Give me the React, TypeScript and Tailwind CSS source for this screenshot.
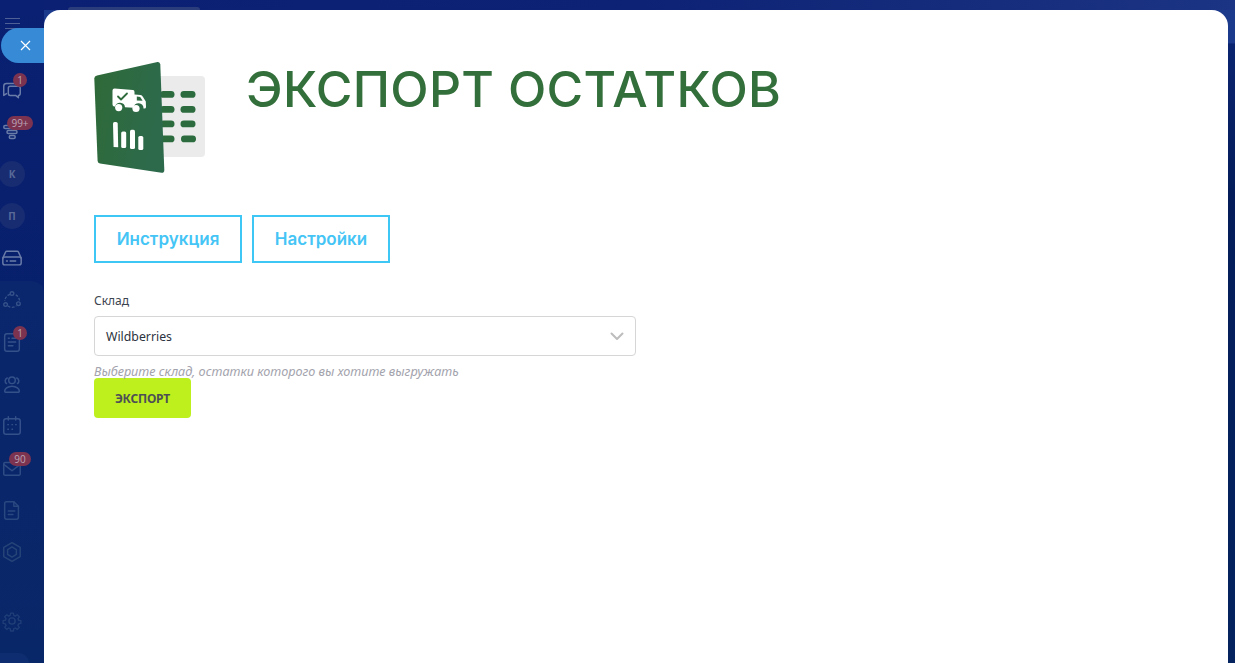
import React from "react";

function Logo() {
  return (
    <svg width="112" height="113" viewBox="94 61 112 113" className="block shrink-0">
      <defs>
        <linearGradient id="g" x1="0" y1="0" x2="1" y2="0.3">
          <stop offset="0" stopColor="#2e6a37" />
          <stop offset="1" stopColor="#2d6a4c" />
        </linearGradient>
      </defs>
      <rect x="150" y="76" width="55" height="81" rx="4" fill="#ebebeb" />
      <g fill="#2b6b3e">
        <rect x="160" y="91" width="14.5" height="6.8" rx="3.4" />
        <rect x="180.5" y="91" width="15" height="6.8" rx="3.4" />
        <rect x="160" y="106" width="14.5" height="6.8" rx="3.4" />
        <rect x="180.5" y="106" width="15" height="6.8" rx="3.4" />
        <rect x="160" y="120.5" width="14.5" height="6.8" rx="3.4" />
        <rect x="180.5" y="120.5" width="15" height="6.8" rx="3.4" />
        <rect x="160" y="135.5" width="14.5" height="6.8" rx="3.4" />
        <rect x="181" y="135.5" width="15" height="6.8" rx="3.4" />
      </g>
      <path
        d="M97 75.5 L157.5 62 Q160 61.6 160.3 64.5 L164.3 170 Q164.4 173 161.5 172.8 L100 163.6 Q97.8 163.2 97.6 161 L94.3 78.5 Q94.3 76.2 97 75.5 Z"
        fill="url(#g)"
      />
      <path
        d="M112.5 90.5 Q112.5 88.5 114.5 88.4 L133 90 Q134.5 90.2 134.5 92 L134.5 94.5 L140.5 95 Q142 95.2 143 97 L145.8 101.5 L146 107 Q146 108.5 144.5 108.5 L143.5 108.5 A5 5 0 0 0 133.5 107.8 L125 107.2 A5 5 0 0 0 115.2 106.5 L114 106.4 Q112.5 106.2 112.5 104.5 Z"
        fill="#fff"
      />
      <circle cx="118.7" cy="107.6" r="3.6" fill="#fff" />
      <circle cx="136" cy="108.5" r="3.6" fill="#fff" />
      <path d="M118 96.5 L121 99.5 L127 93.5" stroke="#2f6b3c" strokeWidth="1.8" fill="none" strokeLinecap="round" strokeLinejoin="round" />
      <path d="M136.8 96.6 L140.2 96.9 L142.6 100.8 L136.8 100.4 Z" fill="#2f6b42" />
      <g fill="#fff">
        <path d="M113 123.5 Q113 122 114.6 122 L116 122 Q117.6 122 117.7 123.5 L118.2 147.2 L113.6 147 Z" />
        <rect x="121.2" y="131.5" width="5" height="16.5" rx="1.6" />
        <rect x="130" y="129.8" width="5" height="19.2" rx="1.6" />
        <rect x="138.3" y="136" width="5" height="14" rx="1.6" />
      </g>
    </svg>
  );
}

const iconCls = "h-[22px] w-[22px]";

function SideIcon({ children, badge, badgeCls, tone }: { children: React.ReactNode; badge?: string; badgeCls?: string; tone: string }) {
  return (
    <div className={`relative flex h-[42px] w-[44px] items-center justify-center pl-[1px] pr-[21px] ${tone}`}>
      <div className="flex w-[22px] shrink-0 items-center justify-center">{children}</div>
      {badge && (
        <span className={`absolute flex h-[14px] items-center justify-center rounded-full bg-[#7c3350] text-[10px] leading-none text-[#b9a5b5] ${badgeCls}`}>
          {badge}
        </span>
      )}
    </div>
  );
}

function Svg({ children }: { children: React.ReactNode }) {
  return (
    <svg className={iconCls} viewBox="0 0 24 24" fill="none" stroke="currentColor" strokeWidth="1.6" strokeLinecap="round" strokeLinejoin="round">
      {children}
    </svg>
  );
}

function Letter({ children }: { children: string }) {
  return (
    <div className="flex h-[26px] w-[26px] shrink-0 items-center justify-center rounded-full bg-[#182c72] text-[10px] font-bold text-[#5a6b98]">
      {children}
    </div>
  );
}

function Sidebar() {
  return (
    <aside className="relative flex w-[44px] shrink-0 flex-col bg-[linear-gradient(180deg,#0a2072_0%,#07206c_45%,#03225f_100%)] font-['Open_Sans',sans-serif]">
      <div className="flex h-[22px] items-end pl-[5px] text-[#4f6097]">
        <div className="flex w-[15px] translate-y-[7px] flex-col gap-[3.5px]">
          <span className="h-[1.5px] bg-current" />
          <span className="h-[1.5px] bg-current" />
          <span className="h-[1.5px] bg-current" />
        </div>
      </div>
      <div className="h-[46px]" />
      <SideIcon tone="text-[#6a7ca8]" badge="1" badgeCls="left-[13px] top-[5px] w-[14px]">
        <Svg>
          <path d="M8 6h7a3 3 0 0 1 .8.1M6 17l-3 2V9a3 3 0 0 1 3-3h2" />
          <path d="M10 9h9a2 2 0 0 1 2 2v6a2 2 0 0 1-2 2v2.5L16 19h-6a2 2 0 0 1-2-2v-6a2 2 0 0 1 2-2Z" />
        </Svg>
      </SideIcon>
      <SideIcon tone="text-[#6a7ca8]" badge="99+" badgeCls="left-[7px] top-[6px] w-[26px]">
        <svg className={iconCls} viewBox="0 0 24 24" fill="none" stroke="currentColor" strokeWidth="1.6">
          <rect x="3" y="6" width="18" height="3.2" rx="1.6" />
          <rect x="6.5" y="11.5" width="11" height="3.2" rx="1.6" />
          <rect x="9" y="17" width="6.5" height="3.2" rx="1.6" />
        </svg>
      </SideIcon>
      <div className="h-[1px]" />
      <SideIcon tone="">
        <Letter>К</Letter>
      </SideIcon>
      <SideIcon tone="">
        <Letter>П</Letter>
      </SideIcon>
      <SideIcon tone="text-[#6a7ca8]">
        <svg className={iconCls} viewBox="0 0 24 24" fill="none" stroke="currentColor" strokeWidth="1.6" strokeLinejoin="round" strokeLinecap="round">
          <path d="M2 12l3-6.5a1.5 1.5 0 0 1 1.4-.9h11.2a1.5 1.5 0 0 1 1.4.9L22 12" />
          <rect x="2" y="11" width="20" height="8.5" rx="2" />
          <path d="M6 15.3h1M10 15.3h6" />
        </svg>
      </SideIcon>
      <div className="relative mt-[2px] flex flex-1 flex-col rounded-tr-[12px] bg-[#0b2a6c]/70">
        <div className="mt-[-2px]">
          <SideIcon tone="text-[#35518a]">
            <svg className={iconCls} viewBox="0 0 24 24" fill="none" stroke="currentColor" strokeWidth="1.5">
              <circle cx="12" cy="5" r="2" />
              <circle cx="5" cy="17" r="2" />
              <circle cx="19" cy="16" r="2" />
              <path d="M9.8 5.8A8 8 0 0 0 4.2 13M7.5 18.5a8 8 0 0 0 9 .2M20.2 12.5a8 8 0 0 0-5-6.5" strokeDasharray="3 1.5" />
            </svg>
          </SideIcon>
        </div>
        <SideIcon tone="text-[#35518a]" badge="1" badgeCls="left-[13px] top-[5px] w-[14px] bg-[#5e2c55] text-[#8c7d9a]">
          <Svg>
            <rect x="4" y="3" width="16" height="19" rx="2.5" />
            <path d="M8 8h1M12 8h4M8 12h8M8 16h5" />
          </Svg>
        </SideIcon>
        <SideIcon tone="text-[#35518a]">
          <Svg>
            <circle cx="12" cy="8" r="3.6" />
            <path d="M4 20c0-2.5 3-5.5 8-5.5s8 3 8 5.5c0 .6-.4 1-1 1H5c-.6 0-1-.4-1-1Z" />
            <path d="M6 11.5a3.4 3.4 0 0 1 .8-6M18 11.5a3.4 3.4 0 0 0-.8-6" />
          </Svg>
        </SideIcon>
        <SideIcon tone="text-[#35518a]">
          <Svg>
            <rect x="3" y="4" width="18" height="17" rx="2.5" />
            <path d="M8 2v3.5M16 2v3.5M7.5 10.5h.5M12 10.5h.5M16 10.5h.5M7.5 15.5h.5M12 15.5h.5" />
          </Svg>
        </SideIcon>
        <SideIcon tone="text-[#2f4c85]" badge="90" badgeCls="left-[9px] top-[5px] h-[13px] w-[22px] bg-[#5e2c55] text-[#8c7d9a]">
          <svg className={iconCls} viewBox="0 0 24 24" fill="none" stroke="currentColor" strokeWidth="1.6" strokeLinecap="round" strokeLinejoin="round">
            <rect x="3" y="6" width="18" height="14" rx="1.5" />
            <path d="M3 8l9 7 9-7" />
          </svg>
        </SideIcon>
        <SideIcon tone="text-[#2a4880]">
          <Svg>
            <path d="M6 3h8l5 5v12a2 2 0 0 1-2 2H6a2 2 0 0 1-2-2V5a2 2 0 0 1 2-2Z" />
            <path d="M14 3v5h5M8 13h7M8 17h5" />
          </Svg>
        </SideIcon>
        <SideIcon tone="text-[#264478]">
          <Svg>
            <path d="M12 1.8l9 5.2v10l-9 5.2L3 17V7Z" />
            <path d="M12 6.5l4.8 2.8v5.4L12 17.5l-4.8-2.8V9.3Z" />
          </Svg>
        </SideIcon>
        <div className="h-[27px]" />
        <SideIcon tone="text-[#1f3e78]">
          <svg className={iconCls} viewBox="0 0 24 24" fill="none" stroke="currentColor" strokeWidth="1.6" strokeLinejoin="round">
            <circle cx="12" cy="12" r="3.4" />
            <path d="M10.3 2.5h3.4l.5 2.8 1.8.8 2.4-1.6 2.4 2.4-1.6 2.4.8 1.8 2.8.5v3.4l-2.8.5-.8 1.8 1.6 2.4-2.4 2.4-2.4-1.6-1.8.8-.5 2.8h-3.4l-.5-2.8-1.8-.8-2.4 1.6-2.4-2.4 1.6-2.4-.8-1.8-2.8-.5v-3.4l2.8-.5.8-1.8-1.6-2.4 2.4-2.4 2.4 1.6 1.8-.8Z" transform="translate(1.2 1.2) scale(.9)" />
          </svg>
        </SideIcon>
        <div className="absolute bottom-0 left-0 h-[10px] w-[29px] rounded-tr-[10px] bg-[#103074]/70" />
      </div>
      <button className="absolute left-[1px] top-[28px] z-10 flex h-[35px] w-[43px] items-center justify-center rounded-l-full bg-[#378ad6] text-white">
        <svg width="13" height="13" viewBox="0 0 13 13" stroke="currentColor" strokeWidth="1.2" fill="none" className="mr-[-5px]">
          <path d="M2 2l9 9M11 2l-9 9" />
        </svg>
      </button>
    </aside>
  );
}

export default function App() {
  return (
    <div className="flex h-[663px] w-[1235px] overflow-hidden">
      <Sidebar />
      <div className="flex min-w-0 flex-1 flex-col">
        <div className="h-[10px] shrink-0 bg-[linear-gradient(90deg,#0b2072_0%,#0d2274_50%,#1c3484_100%)] pl-[24px] pt-[7px]">
          <div className="h-[3px] w-[132px] rounded-t-[6px] bg-[#2c3d7c]" />
        </div>
        <div className="flex flex-1 bg-[linear-gradient(180deg,#1c3a8c_0%,#1c3a8c_5%,#0b2470_5.2%,#041d5a_28%,#04235f_100%)]">
          <main className="flex-1 rounded-t-[16px] bg-white pl-[50px] pt-[51px]">
            <div className="flex h-[154px] items-start">
              <Logo />
              <h1 className="ml-[40px] mt-[-2px] whitespace-nowrap font-['Inter',sans-serif] text-[50px] font-[540] leading-[60px] tracking-[0.3px] text-[#326f3a]">
                ЭКСПОРТ ОСТАТКОВ
              </h1>
            </div>
            <div className="flex gap-[10px]">
              <a className="flex h-[48px] w-[148px] items-center justify-center border-2 border-[#3ec6f5] pt-[2px] font-['Inter',sans-serif] text-[17px] font-semibold text-[#45c5f5]">
                Инструкция
              </a>
              <a className="flex h-[48px] w-[138px] items-center justify-center border-2 border-[#3ec6f5] pt-[2px] font-['Inter',sans-serif] text-[17px] font-semibold text-[#45c5f5]">
                Настройки
              </a>
            </div>
            <div className="mt-[29px] w-[542px] font-['Noto_Sans',sans-serif]">
              <label className="block h-[24px] text-[12px] leading-[18px] text-[#3c4450]">Склад</label>
              <div className="flex h-[40px] items-center justify-between rounded-[4px] border border-[#d6d6d6] pl-[11px] pr-[11px]">
                <span className="translate-y-[1px] text-[12.3px] text-[#2c3340]">Wildberries</span>
                <svg width="14" height="9" viewBox="0 0 14 9" fill="none" stroke="#bdbdbd" strokeWidth="2" strokeLinecap="round" strokeLinejoin="round">
                  <path d="M1.5 1.5L7 7l5.5-5.5" />
                </svg>
              </div>
              <p className="mt-[6px] h-[16px] text-[12.65px] italic leading-[19px] text-[#a3a3ad]">
                Выберите склад, остатки которого вы хотите выгружать
              </p>
              <button className="flex h-[40px] w-[97px] items-center justify-center rounded-[4px] bg-[#bdf01c] pt-[1px] text-[12px] font-bold tracking-[-0.2px] text-[#4d4f55]">
                ЭКСПОРТ
              </button>
            </div>
          </main>
          <div className="w-[7px] shrink-0" />
        </div>
      </div>
    </div>
  );
}
